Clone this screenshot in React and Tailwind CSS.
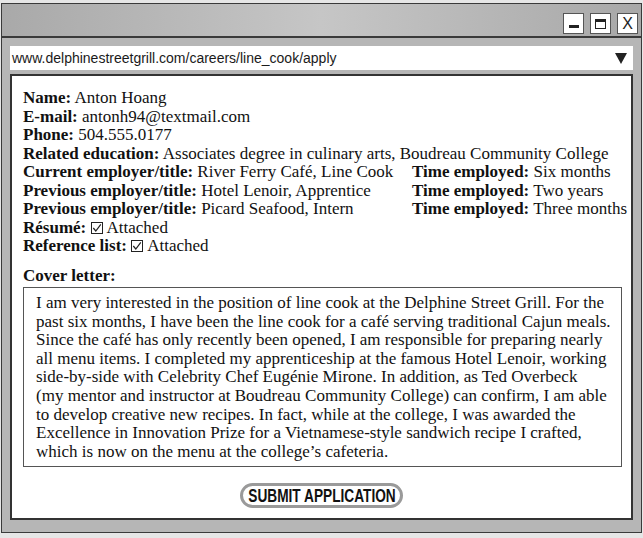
import React from 'react';

const serif = { fontFamily: '"Liberation Serif", "Times New Roman", serif' };

function CheckBox() {
  return (
    <svg width="12" height="12" viewBox="0 0 12 12" className="inline-block align-[-1px] mr-[4px]">
      <rect x="0.5" y="0.5" width="11" height="11" fill="none" stroke="#222" strokeWidth="1" />
      <path d="M2.3 6 L4.8 9 L9.8 2.3" fill="none" stroke="#222" strokeWidth="1.2" />
    </svg>
  );
}

function Field({ label, children }) {
  return (
    <div className="whitespace-nowrap">
      <span className="font-bold">{label}</span> {children}
    </div>
  );
}

const letter = [
  'I am very interested in the position of line cook at the Delphine Street Grill. For the',
  'past six months, I have been the line cook for a café serving traditional Cajun meals.',
  'Since the café has only recently been opened, I am responsible for preparing nearly',
  'all menu items. I completed my apprenticeship at the famous Hotel Lenoir, working',
  'side-by-side with Celebrity Chef Eugénie Mirone. In addition, as Ted Overbeck',
  '(my mentor and instructor at Boudreau Community College) can confirm, I am able',
  'to develop creative new recipes. In fact, while at the college, I was awarded the',
  'Excellence in Innovation Prize for a Vietnamese-style sandwich recipe I crafted,',
  'which is now on the menu at the college’s cafeteria.'
];

export default function App() {
  const jobs = [
    { emp: 'River Ferry Café, Line Cook', time: 'Six months', label: 'Current employer/title:' },
    { emp: 'Hotel Lenoir, Apprentice', time: 'Two years', label: 'Previous employer/title:' },
    { emp: 'Picard Seafood, Intern', time: 'Three months', label: 'Previous employer/title:' }
  ];

  return (
    <div className="w-[643px] h-[538px] bg-[#e6e6e6] pt-[3px] pl-[1px] overflow-hidden">
      <div className="w-[641px] h-[530px] border border-[#3a3a3a] bg-[#b6b6b6] flex flex-col">
        {/* title bar */}
        <div className="shrink-0 h-[34px] border-b-2 border-[#3a3a3a] bg-gradient-to-r from-[#a9a9a9] via-[#c6c6c6] to-[#a8a8a8] flex items-end justify-end gap-[6px] pr-[3px] pb-[2px]">
          <div className="w-[21px] h-[21px] bg-white border border-[#555] flex items-end justify-center pb-[5px]">
            <div className="w-[10px] h-[3px] bg-[#222]" />
          </div>
          <div className="w-[21px] h-[21px] bg-white border border-[#555] flex items-center justify-center">
            <div className="w-[11px] h-[10px] border border-[#222] border-t-[3px]" />
          </div>
          <div
            className="w-[21px] h-[21px] bg-white border border-[#555] flex items-center justify-center text-[16px] leading-none text-[#222]"
            style={{ fontFamily: '"Liberation Sans", Arial, sans-serif' }}
          >
            X
          </div>
        </div>

        {/* address bar */}
        <div className="shrink-0 px-[8px] pt-[8px]">
          <div
            className="h-[24px] bg-white flex items-center justify-between pl-[2px] pr-[6px] text-[14px] text-[#1a1a1a]"
            style={{ fontFamily: '"Liberation Sans", Arial, sans-serif' }}
          >
            <span>www.delphinestreetgrill.com/careers/line_cook/apply</span>
            <svg width="12" height="11" viewBox="0 0 12 11">
              <path d="M0 0 H12 L6 11 Z" fill="#222" />
            </svg>
          </div>
        </div>

        {/* page content */}
        <div
          className="mx-[8px] mt-[4px] mb-[12px] flex-1 min-h-0 bg-white border-2 border-[#333] pl-[11px] pr-[9px] pt-[13px] flex flex-col text-[17px] leading-[18.5px] text-[#111]"
          style={serif}
        >
          <Field label="Name:">Anton Hoang</Field>
          <Field label="E-mail:">antonh94@textmail.com</Field>
          <Field label="Phone:">504.555.0177</Field>
          <Field label="Related education:">Associates degree in culinary arts, Boudreau Community College</Field>
          <div className="grid grid-cols-[389px_1fr]">
            {jobs.map((j, i) => (
              <React.Fragment key={i}>
                <Field label={j.label}>{j.emp}</Field>
                <Field label="Time employed:">{j.time}</Field>
              </React.Fragment>
            ))}
          </div>
          <Field label="Résumé:"><CheckBox />Attached</Field>
          <Field label="Reference list:"><CheckBox />Attached</Field>

          <div className="font-bold mt-[11px]">Cover letter:</div>
          <div className="mt-[2px] border border-[#555] pl-[12px] pr-[8px] pt-[6px] pb-[5px] leading-[18.6px]">
            {letter.map((line, i) => (
              <div key={i} className="whitespace-nowrap">{line}</div>
            ))}
          </div>

          <div className="flex justify-center mt-[16px] pr-[2px]">
            <button className="w-[163px] h-[25px] rounded-full border-[3px] border-[#9a9a9a] bg-white flex items-center justify-center overflow-visible">
              <span
                className="inline-block whitespace-nowrap text-[18px] font-bold text-[#111] leading-none scale-x-[0.76]"
                style={{ fontFamily: '"Liberation Sans", Arial, sans-serif' }}
              >
                SUBMIT APPLICATION
              </span>
            </button>
          </div>
        </div>
      </div>
    </div>
  );
}
